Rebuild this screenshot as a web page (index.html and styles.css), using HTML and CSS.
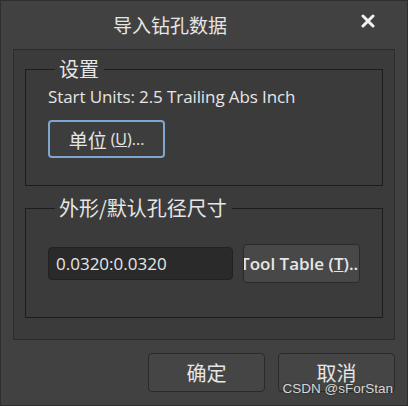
FILE: index.html
```html
<!DOCTYPE html>
<html lang="zh-CN">
<head>
    <meta charset="UTF-8">
    <meta name="viewport" content="width=device-width, initial-scale=1.0">
    <title>导入钻孔数据</title>
    <link rel="stylesheet" href="styles.css">
</head>
<body>
    <div class="dialog">
        <div class="titlebar">
            <span class="title">导入钻孔数据</span>
            <button class="close-btn" aria-label="关闭">
                <svg width="14" height="14" viewBox="0 0 14 14">
                    <path d="M2 2 L12 12 M12 2 L2 12" stroke="#f2f2f2" stroke-width="3" stroke-linecap="round"/>
                </svg>
            </button>
        </div>

        <div class="panel">
            <fieldset class="group group-settings">
                <legend>设置</legend>
                <p class="info">Start Units: 2.5 Trailing Abs Inch</p>
                <button class="btn btn-focus">单位 <span class="latin">(<u>U</u>)...</span></button>
            </fieldset>

            <fieldset class="group group-size">
                <legend>外形/默认孔径尺寸</legend>
                <div class="size-row">
                    <input class="field" type="text" value="0.0320:0.0320">
                    <button class="btn btn-tool"><span>Tool Table (<u>T</u>)...</span></button>
                </div>
            </fieldset>
        </div>

        <div class="actions">
            <button class="btn btn-action">确定</button>
            <button class="btn btn-action">取消</button>
        </div>

        <span class="watermark">CSDN @sForStan</span>
    </div>
</body>
</html>
```

FILE: styles.css
```css
:root {
    --bg-color: #414141;
    --panel-color: #3b3b3b;
    --line-color: #2c2c2c;
    --group-line: #1d1d1d;
    --text-color: #e6e6e6;
    --focus-color: #7ea6d0;
    --latin-font: 'Open Sans', 'Noto Sans', sans-serif;
    --cjk-font: 'Noto Sans CJK SC', sans-serif;
}

* {
    box-sizing: border-box;
}

body {
    margin: 0;
    padding: 0;
    background-color: var(--bg-color);
    font-family: var(--latin-font);
    color: var(--text-color);
}

.dialog {
    position: relative;
    width: 408px;
    height: 406px;
    background-color: var(--bg-color);
    border: 1px solid #2e2e2e;
    display: flex;
    flex-direction: column;
}

.titlebar {
    height: 48px;
    display: flex;
    align-items: center;
    justify-content: space-between;
    padding: 0 32px 2px 112px;
}

.title {
    font-family: var(--cjk-font);
    font-size: 19px;
    line-height: 1;
}

.close-btn {
    background: none;
    border: none;
    padding: 0;
    width: 14px;
    height: 14px;
    display: flex;
    margin-top: -6px;
}

.panel {
    margin: 0 12px;
    height: 291px;
    background-color: var(--panel-color);
    border: 1px solid var(--line-color);
    padding: 8px 11px 0;
    display: flex;
    flex-direction: column;
    gap: 11px;
}

.group {
    margin: 0;
    padding: 0 0 0 22px;
    border: 1px solid var(--group-line);
    min-width: 0;
}

.group legend {
    font-family: var(--cjk-font);
    font-size: 20px;
    line-height: 22px;
    margin-left: 7px;
    padding: 0 5px 0 4px;
}

.group-settings {
    height: 128px;
}

.group-size {
    height: 121px;
}

.info {
    margin: 6px 0 12px;
    font-size: 17px;
    line-height: 22px;
    letter-spacing: -0.1px;
}

.btn {
    font-family: var(--cjk-font);
    color: var(--text-color);
    background-color: #454545;
    border: 1px solid #2a2a2a;
    border-radius: 4px;
    padding: 0;
    display: flex;
    align-items: center;
    justify-content: center;
}

.btn-focus {
    width: 117px;
    height: 38px;
    font-size: 19px;
    background-color: #3d3d3d;
    border: 2px solid var(--focus-color);
    gap: 4px;
}

.latin {
    font-family: var(--latin-font);
    font-size: 16px;
}

.size-row {
    display: flex;
    align-items: center;
    gap: 10px;
    margin-top: 25px;
}

.field {
    width: 185px;
    height: 33px;
    background-color: #2a2a2a;
    border: 1px solid #222;
    border-radius: 4px;
    color: var(--text-color);
    font-family: var(--latin-font);
    font-size: 17px;
    padding: 0 7px;
    outline: none;
}

.btn-tool {
    width: 117px;
    height: 39px;
    overflow: hidden;
    background-color: #484848;
    font-family: var(--latin-font);
    font-size: 17px;
    font-weight: 600;
    white-space: nowrap;
}

.actions {
    display: flex;
    justify-content: flex-end;
    gap: 13px;
    padding: 13px 12px 0;
}

.btn-action {
    width: 117px;
    height: 39px;
    font-size: 20px;
}

.watermark {
    position: absolute;
    right: 14px;
    bottom: 9px;
    font-family: 'Liberation Sans', Arial, sans-serif;
    font-size: 13.5px;
    color: #d8d8d8;
    text-shadow: 0 0 2px #222;
}
```
